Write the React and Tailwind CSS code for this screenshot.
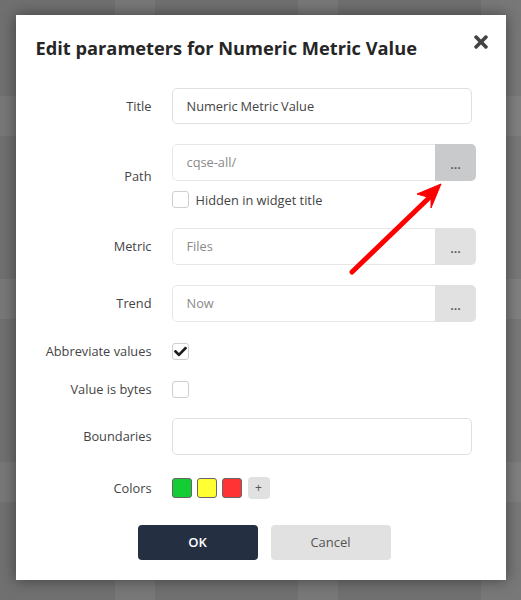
import { FaTimes, FaCheck } from 'react-icons/fa';

const Label = ({ children }) => (
  <label className="w-[116px] shrink-0 text-right text-[12.8px] leading-[17px] whitespace-nowrap text-[#444]">{children}</label>
);

const PickerInput = ({ value, active }) => (
  <div className="flex h-[37px] w-[304px] overflow-hidden rounded-[5px]">
    <div className="flex flex-1 items-center rounded-l-[5px] border border-r-0 border-[#e6e6e6] pt-[1px] pl-[14px] text-[12.8px] text-[#8a8a8a]">
      {value}
    </div>
    <button className={`w-[41px] pt-[3px] pl-[1px] text-[13px] leading-none font-semibold text-[#555] ${active ? 'bg-[#c9cacc]' : 'bg-[#e1e1e1]'}`}>
      ...
    </button>
  </div>
);

const Checkbox = ({ checked }) => (
  <div className="flex h-[17px] w-[17px] items-center justify-center rounded-[3px] border border-[#cfcfcf] bg-white text-[13px] text-[#1c1c1c]">
    {checked && <FaCheck />}
  </div>
);

const Swatch = ({ color }) => (
  <div className={`h-5 w-5 rounded-[3px] border border-[#666] ${color}`} />
);

const App = () => {
  return (
    <div className="relative h-[600px] w-[521px] overflow-hidden bg-[#707070] bg-[linear-gradient(90deg,transparent_115px,rgba(255,255,255,0.06)_115px,rgba(255,255,255,0.06)_155px,transparent_155px),linear-gradient(180deg,transparent_96px,rgba(255,255,255,0.06)_96px,rgba(255,255,255,0.06)_136px,transparent_136px)] bg-[length:183px_183px] pt-[15px] font-['Open_Sans',sans-serif]">
      <div className="relative mx-auto h-[565px] w-[490px] bg-white px-5 pt-[19px] shadow-[0_0_14px_rgba(0,0,0,0.45)]">
        <h2 className="text-[18.25px] leading-[27px] font-bold text-[#262626]">Edit parameters for Numeric Metric Value</h2>
        <button className="absolute top-[17px] right-[15px] text-[20px] text-[#444]">
          <FaTimes />
        </button>

        <div className="mt-[27px] flex flex-col">
          <div className="flex items-center gap-5">
            <Label>Title</Label>
            <div className="flex h-9 w-[300px] items-center rounded-[5px] border border-[#e0e0e0] pt-[1px] pl-[14px] text-[12.8px] [word-spacing:-0.5px] text-[#444]">
              Numeric Metric Value
            </div>
          </div>

          <div className="mt-5 flex items-center gap-5">
            <Label>Path</Label>
            <div className="flex flex-col gap-[10px]">
              <PickerInput value="cqse-all/" active />
              <div className="flex items-center gap-[7px]">
                <Checkbox />
                <span className="pt-[1px] text-[12.8px] leading-[16px] text-[#444]">Hidden in widget title</span>
              </div>
            </div>
          </div>

          <div className="mt-5 flex items-center gap-5">
            <Label>Metric</Label>
            <PickerInput value="Files" />
          </div>

          <div className="mt-5 flex items-center gap-5">
            <Label>Trend</Label>
            <PickerInput value="Now" />
          </div>

          <div className="mt-[21px] flex items-center gap-5">
            <Label>Abbreviate values</Label>
            <Checkbox checked />
          </div>

          <div className="mt-[21px] flex items-center gap-5">
            <Label>Value is bytes</Label>
            <Checkbox />
          </div>

          <div className="mt-5 flex items-center gap-5">
            <Label>Boundaries</Label>
            <div className="h-[37px] w-[300px] rounded-[5px] border border-[#e0e0e0]" />
          </div>

          <div className="mt-[22px] flex items-center gap-5">
            <Label>Colors</Label>
            <div className="flex items-center gap-[5px]">
              <Swatch color="bg-[#14cc33]" />
              <Swatch color="bg-[#ffff33]" />
              <Swatch color="bg-[#ff3333]" />
              <button className="ml-[1px] h-[22px] w-[22px] rounded-[4px] bg-[#e1e1e1] text-[12px] leading-none text-[#555]">+</button>
            </div>
          </div>

          <div className="mt-[26px] flex justify-center gap-[13px] pl-[7px]">
            <button className="h-[35px] w-[120px] rounded-[4px] bg-[#252f42] pt-[1px] text-[13px] font-semibold text-white">OK</button>
            <button className="h-[35px] w-[120px] rounded-[4px] bg-[#e1e1e1] pt-[1px] text-[13px] text-[#555]">Cancel</button>
          </div>
        </div>
      </div>

      <svg className="absolute top-0 left-0" width="521" height="600" viewBox="0 0 521 600" fill="none">
        <path d="M352 272L432 195" stroke="#ff0000" strokeWidth="5" strokeLinecap="round" />
        <path d="M441 184L417 194L431 198L431 208Z" fill="#ff0000" stroke="#ff0000" strokeWidth="1" strokeLinejoin="round" />
      </svg>
    </div>
  );
};

export default App;
